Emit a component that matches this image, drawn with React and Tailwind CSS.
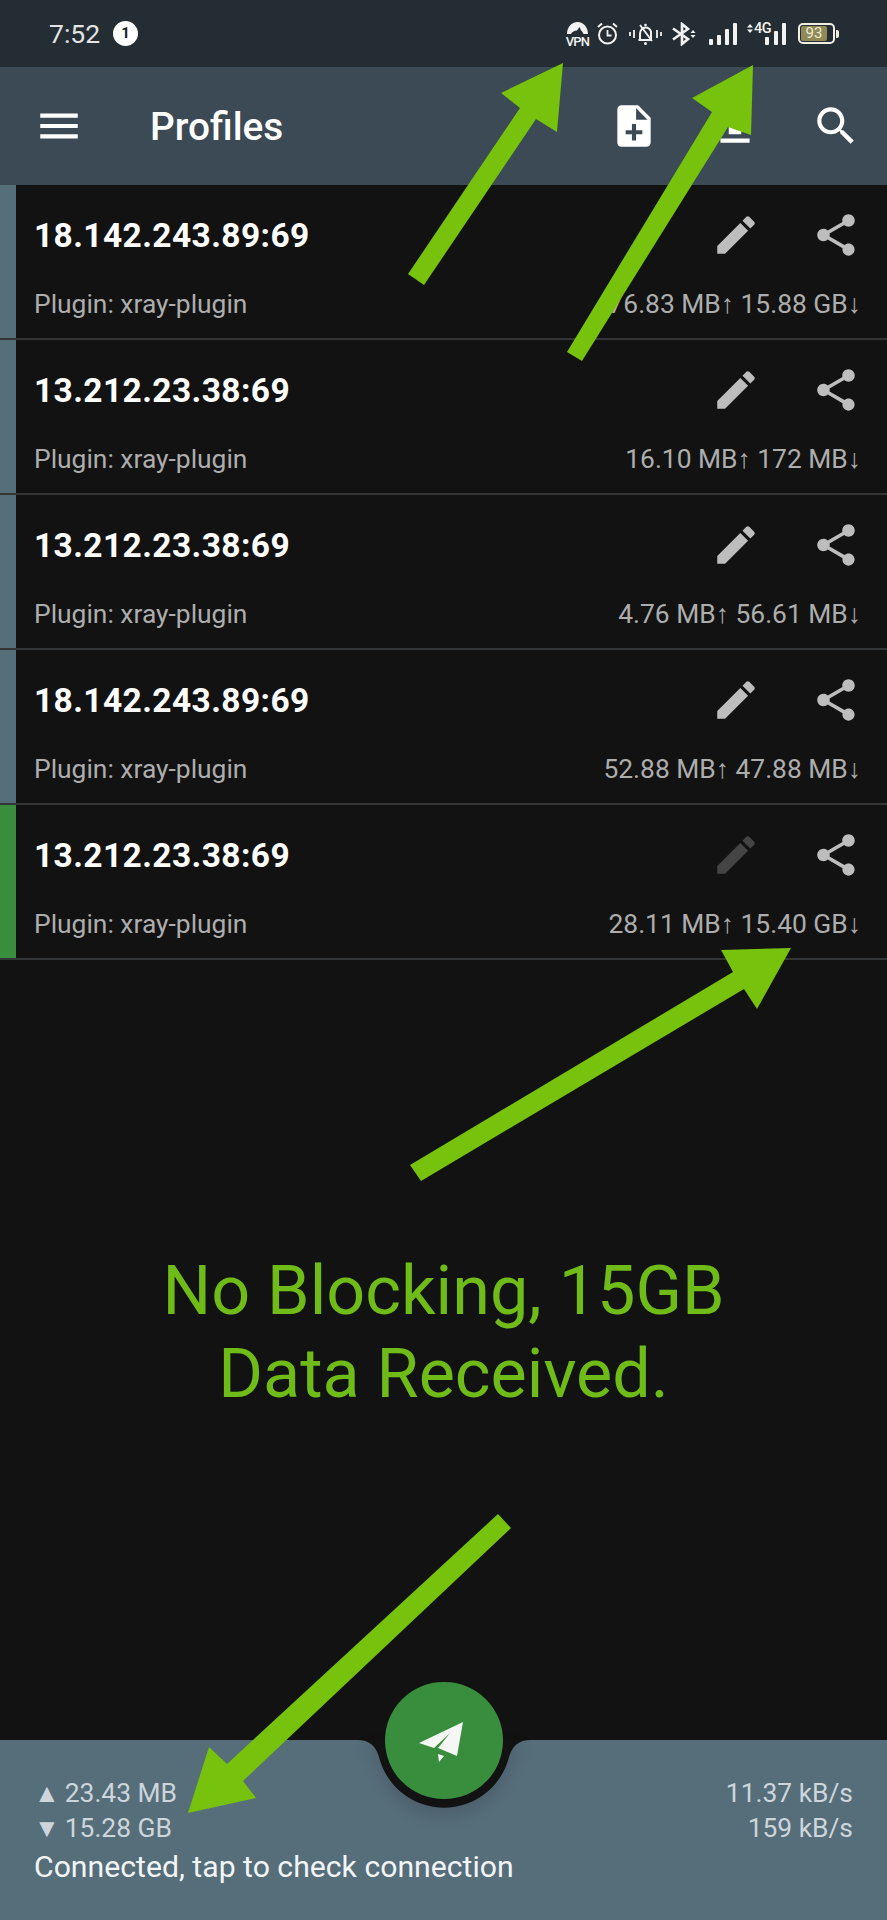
import React from "react";

const Ic = ({ d, className }) => (
  <svg viewBox="0 0 24 24" className={className} fill="currentColor"><path d={d} /></svg>
);

const EDIT = "M3 17.25V21h3.75L17.81 9.94l-3.75-3.75L3 17.25zM20.71 7.04c.39-.39.39-1.02 0-1.41l-2.34-2.34c-.39-.39-1.02-.39-1.41 0l-1.83 1.83 3.75 3.75 1.83-1.83z";
const SHARE = "M18 16.08c-.76 0-1.44.3-1.96.77L8.91 12.7c.05-.23.09-.46.09-.7s-.04-.47-.09-.7l7.05-4.11c.54.5 1.25.81 2.04.81 1.66 0 3-1.34 3-3s-1.34-3-3-3-3 1.34-3 3c0 .24.04.47.09.7L8.04 9.81C7.5 9.31 6.79 9 6 9c-1.66 0-3 1.34-3 3s1.34 3 3 3c.79 0 1.5-.31 2.04-.81l7.12 4.16c-.05.21-.08.43-.08.65 0 1.61 1.31 2.92 2.92 2.92s2.92-1.31 2.92-2.92-1.31-2.92-2.92-2.92z";
const MENU = "M3 18h18v-2H3v2zm0-5h18v-2H3v2zm0-7v2h18V6H3z";
const NOTE = "M14 2H6c-1.1 0-1.99.9-1.99 2L4 20c0 1.1.89 2 1.99 2H18c1.1 0 2-.9 2-2V8l-6-6zm2 14h-3v3h-2v-3H8v-2h3v-3h2v3h3v2zm-3-7V3.5L18.5 9H13z";
const UPLOAD = "M9 16h6v-6h4l-7-7-7 7h4zm-4 2h14v2H5z";
const SEARCH = "M15.5 14h-.79l-.28-.27C15.41 12.59 16 11.11 16 9.5 16 5.91 13.09 3 9.5 3S3 5.91 3 9.5 5.91 16 9.5 16c1.61 0 3.09-.59 4.23-1.57l.27.28v.79l5 4.99L20.49 19l-4.99-5zm-6 0C7.01 14 5 11.99 5 9.5S7.01 5 9.5 5 14 7.01 14 9.5 11.99 14 9.5 14z";

const rows = [
  { host: "18.142.243.89:69", traffic: "76.83 MB↑ 15.88 GB↓" },
  { host: "13.212.23.38:69", traffic: "16.10 MB↑ 172 MB↓" },
  { host: "13.212.23.38:69", traffic: "4.76 MB↑ 56.61 MB↓" },
  { host: "18.142.243.89:69", traffic: "52.88 MB↑ 47.88 MB↓" },
  { host: "13.212.23.38:69", traffic: "28.11 MB↑ 15.40 GB↓", active: true },
];

function Row({ host, traffic, active }) {
  return (
    <div className="flex h-[155px] border-b-2 border-[#333537]">
      <div className={active ? "w-[16px] bg-[#388e3c]" : "w-[16px] bg-[#546e7a]"} />
      <div className="flex-1 pl-[18px] pr-[26px] pt-[25px]">
        <div className="flex h-[50px] items-center justify-between">
          <span className="mt-[2px] text-[33.500px] font-bold tracking-[0.4px] text-white">{host}</span>
          <div className="flex gap-[50px]">
            <Ic d={EDIT} className={active ? "h-[50px] w-[50px] text-[#444444]" : "h-[50px] w-[50px] text-[#bdbdbd]"} />
            <Ic d={SHARE} className="h-[50px] w-[50px] text-[#bdbdbd]" />
          </div>
        </div>
        <div className="mt-[27px] flex h-[36px] items-center justify-between text-[26.400px] text-[#adadad]">
          <span>Plugin: xray-plugin</span>
          <span>{traffic}</span>
        </div>
      </div>
    </div>
  );
}

function StatusIcons() {
  return (
    <div className="flex items-center pr-[48px] text-[#f2f2f2]">
      {/* VPN */}
      <div className="relative h-[24px] w-[21px]">
        <svg viewBox="0 0 21 13" className="absolute left-0 top-0 h-[13px] w-[21px]" fill="currentColor">
          <path d="M0 12C0 5 4.500 0 10.500 0S21 5 21 12h-4.500c-.5-1.500-1.500-3-2.500-3.500L12.500 5 10 8.500c-2.500 0-5 1.500-6 3.500z" />
        </svg>
        <span className="absolute bottom-[-2px] left-[-2px] w-[25px] text-center text-[13px] font-medium leading-[12px] tracking-[-0.8px]">VPN</span>
      </div>
      {/* Alarm */}
      <svg viewBox="0 0 21 23" className="ml-[9px] h-[23px] w-[21px]" fill="none" stroke="currentColor" strokeWidth="2">
        <circle cx="10.500" cy="13" r="8.500" />
        <path d="M10.500 8v5.500h4" strokeWidth="1.800" />
        <path d="M1 5l4-3.500M20 5l-4-3.500" strokeWidth="2" />
      </svg>
      {/* Muted vibrating bell */}
      <svg viewBox="0 0 33 22" className="ml-[11px] h-[22px] w-[33px]" fill="none" stroke="currentColor" strokeWidth="2">
        <path d="M1 9v4M5 7v8M28 7v8M32 9v4" strokeWidth="1.800" />
        <path d="M9.500 17h13.500M11 17v-6c0-3.500 2.500-6.500 5.500-6.500 2.500 0 4.500 1.500 5.500 4v8.500" />
        <path d="M11 2l12 16" strokeWidth="1.800" />
        <circle cx="16.500" cy="20.500" r="1.500" fill="currentColor" stroke="none" />
        <circle cx="16.500" cy="2" r="1.300" fill="currentColor" stroke="none" />
      </svg>
      {/* Bluetooth */}
      <svg viewBox="0 0 26 24" className="ml-[10px] h-[24px] w-[26px]" fill="none" stroke="currentColor">
        <path d="M1 6.500l15 10.500-6 5V2l6 5L1 17.500" strokeWidth="2.600" />
        <path d="M21 8l2.500 3h-5zM21 16l2.500-3h-5z" fill="currentColor" stroke="none" />
      </svg>
      {/* Signal 1 */}
      <svg viewBox="0 0 28 22" className="ml-[11px] h-[22px] w-[28px]" fill="currentColor">
        <rect x="0" y="16" width="4" height="6" rx="1" />
        <rect x="8" y="12" width="4" height="10" rx="1" />
        <rect x="16" y="6" width="4" height="16" rx="1" />
        <rect x="24" y="0" width="4" height="22" rx="1" />
      </svg>
      {/* Signal 2 with 4G */}
      <div className="relative ml-[10px] h-[22px] w-[39px]">
        <svg viewBox="0 0 39 22" className="absolute inset-0 h-[22px] w-[39px]" fill="currentColor">
          <path d="M3 1l3 3.500H0zM3 10l3-3.500H0z" />
          <rect x="18" y="14" width="4" height="8" rx="1" />
          <rect x="27" y="8" width="4" height="14" rx="1" />
          <rect x="35" y="0" width="4" height="22" rx="1" />
        </svg>
        <span className="absolute left-[7px] top-[-1px] text-[14.500px] font-medium leading-[14px] tracking-[-0.4px]">4G</span>
      </div>
      {/* Battery */}
      <div className="ml-[12px] flex items-center">
        <div className="flex h-[21px] w-[37px] items-center rounded-[5px] border-2 border-[#f0efe2] p-[1px]">
          <div className="flex h-full w-[26px] items-center justify-center rounded-[2px] bg-[#8f8a58] text-[15px] leading-none text-[#efeccf]">93</div>
        </div>
        <div className="ml-[1px] h-[8px] w-[3px] rounded-r-[2px] bg-[#f0efe2]" />
      </div>
    </div>
  );
}

export default function App() {
  return (
    <div
      className="relative flex h-[1920px] w-[887px] flex-col overflow-hidden bg-[#121212]"
      style={{ fontFamily: "Roboto, sans-serif" }}
    >
      {/* status bar */}
      <div className="flex h-[67px] items-center justify-between bg-[#252d34]">
        <div className="flex items-center pl-[49px]">
          <span className="text-[26.500px] text-[#e4e4e4]">7:52</span>
          <span className="ml-[13px] flex h-[25px] w-[25px] items-center justify-center rounded-full bg-white text-[15px] font-bold text-[#1a1a1a]">1</span>
        </div>
        <StatusIcons />
      </div>

      {/* toolbar */}
      <div className="flex h-[118px] items-center bg-[#3c4a55] pl-[34px] pr-[26px] text-white">
        <Ic d={MENU} className="h-[50px] w-[50px]" />
        <span className="ml-[66px] mt-[2px] text-[38.800px] font-medium">Profiles</span>
        <div className="ml-auto flex gap-[51px]">
          <Ic d={NOTE} className="h-[50px] w-[50px]" />
          <Ic d={UPLOAD} className="h-[50px] w-[50px]" />
          <Ic d={SEARCH} className="h-[50px] w-[50px]" />
        </div>
      </div>

      {/* list */}
      <div>
        {rows.map((r, i) => (
          <Row key={i} {...r} />
        ))}
      </div>

      {/* message */}
      <div className="flex flex-1 flex-col items-center justify-center pb-[34px] text-center text-[68.300px] leading-[83px] text-[#6fbb18]">
        <div>No Blocking, 15GB</div>
        <div>Data Received.</div>
      </div>

      {/* footer */}
      <div className="relative h-[180px] bg-[#566d7a] pl-[34px] pr-[34px] pt-[36px]">
        <div className="flex h-[35px] items-center justify-between text-[26.400px] text-[#ccd6dc]">
          <span><span className="mr-[5px] text-[26px] leading-none">▲</span>23.43 MB</span>
          <span>11.37 kB/s</span>
        </div>
        <div className="flex h-[35px] items-center justify-between text-[26.400px] text-[#ccd6dc]">
          <span><span className="mr-[5px] text-[26px] leading-none">▼</span>15.28 GB</span>
          <span>159 kB/s</span>
        </div>
        <div className="mt-[1px] text-[30.200px] leading-[40px] text-[#f2f5f6]">Connected, tap to check connection</div>

        {/* notch */}
        <svg viewBox="0 0 887 80" className="absolute left-0 top-0 h-[80px] w-[887px] drop-shadow-[0_8px_8px_rgba(0,0,0,0.12)]" fill="#121212">
          <path d="M358 0Q374 0 379 17A67 67 0 0 0 509 17Q514 0 530 0Z" />
        </svg>
        {/* FAB */}
        <div className="absolute left-[385px] top-[-58px] flex h-[117px] w-[118px] items-center justify-center rounded-full bg-[#388e3c]">
          <svg viewBox="414 1710 60 60" className="h-[60px] w-[60px]" fill="#f5f7f4">
            <path d="M463 1721L419 1742L434 1747L450 1732L438 1747L457 1755ZM438 1753L444 1755L439 1761Z" />
          </svg>
        </div>
      </div>

      {/* annotation arrows */}
      <svg viewBox="0 0 887 1920" className="pointer-events-none absolute left-0 top-0 h-[1920px] w-[887px]" fill="#76c20c">
        <polygon points="408,274 424,285 536,119 557,132 563,63 501,93 520,108" />
        <polygon points="567,352 582,361 728,127 751,135 753,65 692,98 712,112" />
        <polygon points="410,1165 421,1181 744,989 757,1009 791,948 721,950 733,972" />
        <polygon points="498,1514 511,1528 243,1781 256,1798 188,1813 209,1747 227,1764" />
      </svg>
    </div>
  );
}
